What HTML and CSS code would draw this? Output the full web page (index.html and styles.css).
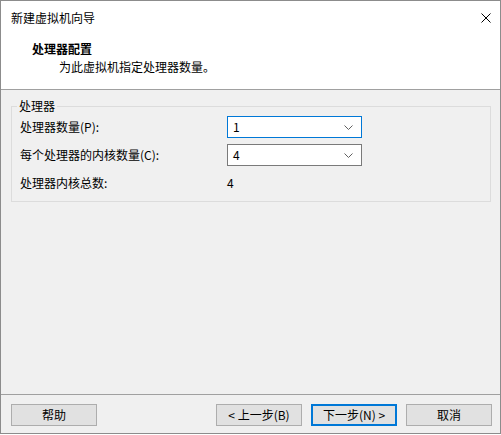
FILE: index.html
```html
<!DOCTYPE html>
<html lang="zh-CN">
<head>
<meta charset="utf-8">
<title>新建虚拟机向导</title>
<link rel="stylesheet" href="styles.css">
</head>
<body>
<div class="window">
  <div class="header">
    <div class="titlebar">
      <span class="title">新建虚拟机向导</span>
      <svg class="close" width="10" height="10" viewBox="0 0 10 10"><path d="M0.5 0.5 L9.5 9.5 M9.5 0.5 L0.5 9.5" stroke="#000" stroke-width="1" fill="none"/></svg>
    </div>
    <div class="heading">
      <div class="heading-title">处理器配置</div>
      <div class="heading-sub">为此虚拟机指定处理器数量。</div>
    </div>
  </div>
  <div class="content">
    <fieldset class="group">
      <legend class="group-legend">处理器</legend>
      <div class="grid">
        <div class="label">处理器数量(P):</div>
        <div class="combo combo-focus"><span class="combo-value">1</span><svg class="chev" width="9" height="5" viewBox="0 0 9 5"><path d="M0.5 0.5 L4.5 4.5 L8.5 0.5" stroke="#606060" stroke-width="1" fill="none"/></svg></div>
        <div class="label">每个处理器的内核数量(C):</div>
        <div class="combo"><span class="combo-value">4</span><svg class="chev" width="9" height="5" viewBox="0 0 9 5"><path d="M0.5 0.5 L4.5 4.5 L8.5 0.5" stroke="#606060" stroke-width="1" fill="none"/></svg></div>
        <div class="label">处理器内核总数:</div>
        <div class="value">4</div>
      </div>
    </fieldset>
  </div>
  <div class="footer">
    <button class="btn">帮助</button>
    <div class="spacer"></div>
    <button class="btn">&lt; 上一步(B)</button>
    <button class="btn btn-default">下一步(N) &gt;</button>
    <button class="btn">取消</button>
  </div>
</div>
</body>
</html>
```
FILE: styles.css
```css
* { box-sizing: border-box; }
html, body { margin: 0; padding: 0; background: #ffffff; }
body {
  font-family: "Noto Sans CJK SC", "Noto Sans", sans-serif;
  font-size: 12px;
  color: #000;
}
.window {
  width: 501px;
  height: 434px;
  border: 1px solid #8c8c8c;
  background: #f0f0f0;
  display: flex;
  flex-direction: column;
}
.header {
  background: #fff;
  height: 89px;
  border-bottom: 1px solid #a0a0a0;
  flex: none;
}
.titlebar {
  display: flex;
  align-items: center;
  justify-content: space-between;
  padding: 9px 9px 0 10px;
  height: 25px;
  line-height: 16px;
}
.close { margin-right: 0; margin-top: -1px; }
.heading {
  padding-top: 14px;
  line-height: 18px;
}
.heading-title {
  padding-left: 31px;
  font-weight: bold;
}
.heading-sub {
  padding-left: 58px;
}
.content {
  flex: 1;
  padding: 8px 9px 0 10px;
}
.group {
  margin: 0;
  border: 1px solid #dcdcdc;
  padding: 2px 8px 7px 8px;
  min-width: 0;
}
.group-legend {
  margin-left: -3px;
  padding: 0 2px;
  line-height: 16px;
}
.grid {
  display: grid;
  grid-template-columns: 207px 135px;
  grid-auto-rows: 22px;
  row-gap: 6px;
  align-items: center;
}
.label, .value { line-height: 16px; }
.combo {
  height: 22px;
  background: #fff;
  border: 1px solid #7a7a7a;
  display: flex;
  align-items: center;
  justify-content: space-between;
  padding: 0 8px 0 5px;
}
.combo-focus { border-color: #0078d7; }
.combo-value { line-height: 16px; }
.chev { margin-top: 1px; }
.footer {
  flex: none;
  border-top: 1px solid #a0a0a0;
  display: flex;
  align-items: flex-start;
  gap: 9px;
  padding: 9px 8px 0 10px;
  height: 39px;
}
.spacer { flex: 1; }
.btn {
  width: 86px;
  height: 22px;
  background: #e1e1e1;
  border: 1px solid #adadad;
  font-family: inherit;
  font-size: 12px;
  color: #000;
  padding: 0;
  line-height: 16px;
}
.btn-default { border: 2px solid #0078d7; }
```
